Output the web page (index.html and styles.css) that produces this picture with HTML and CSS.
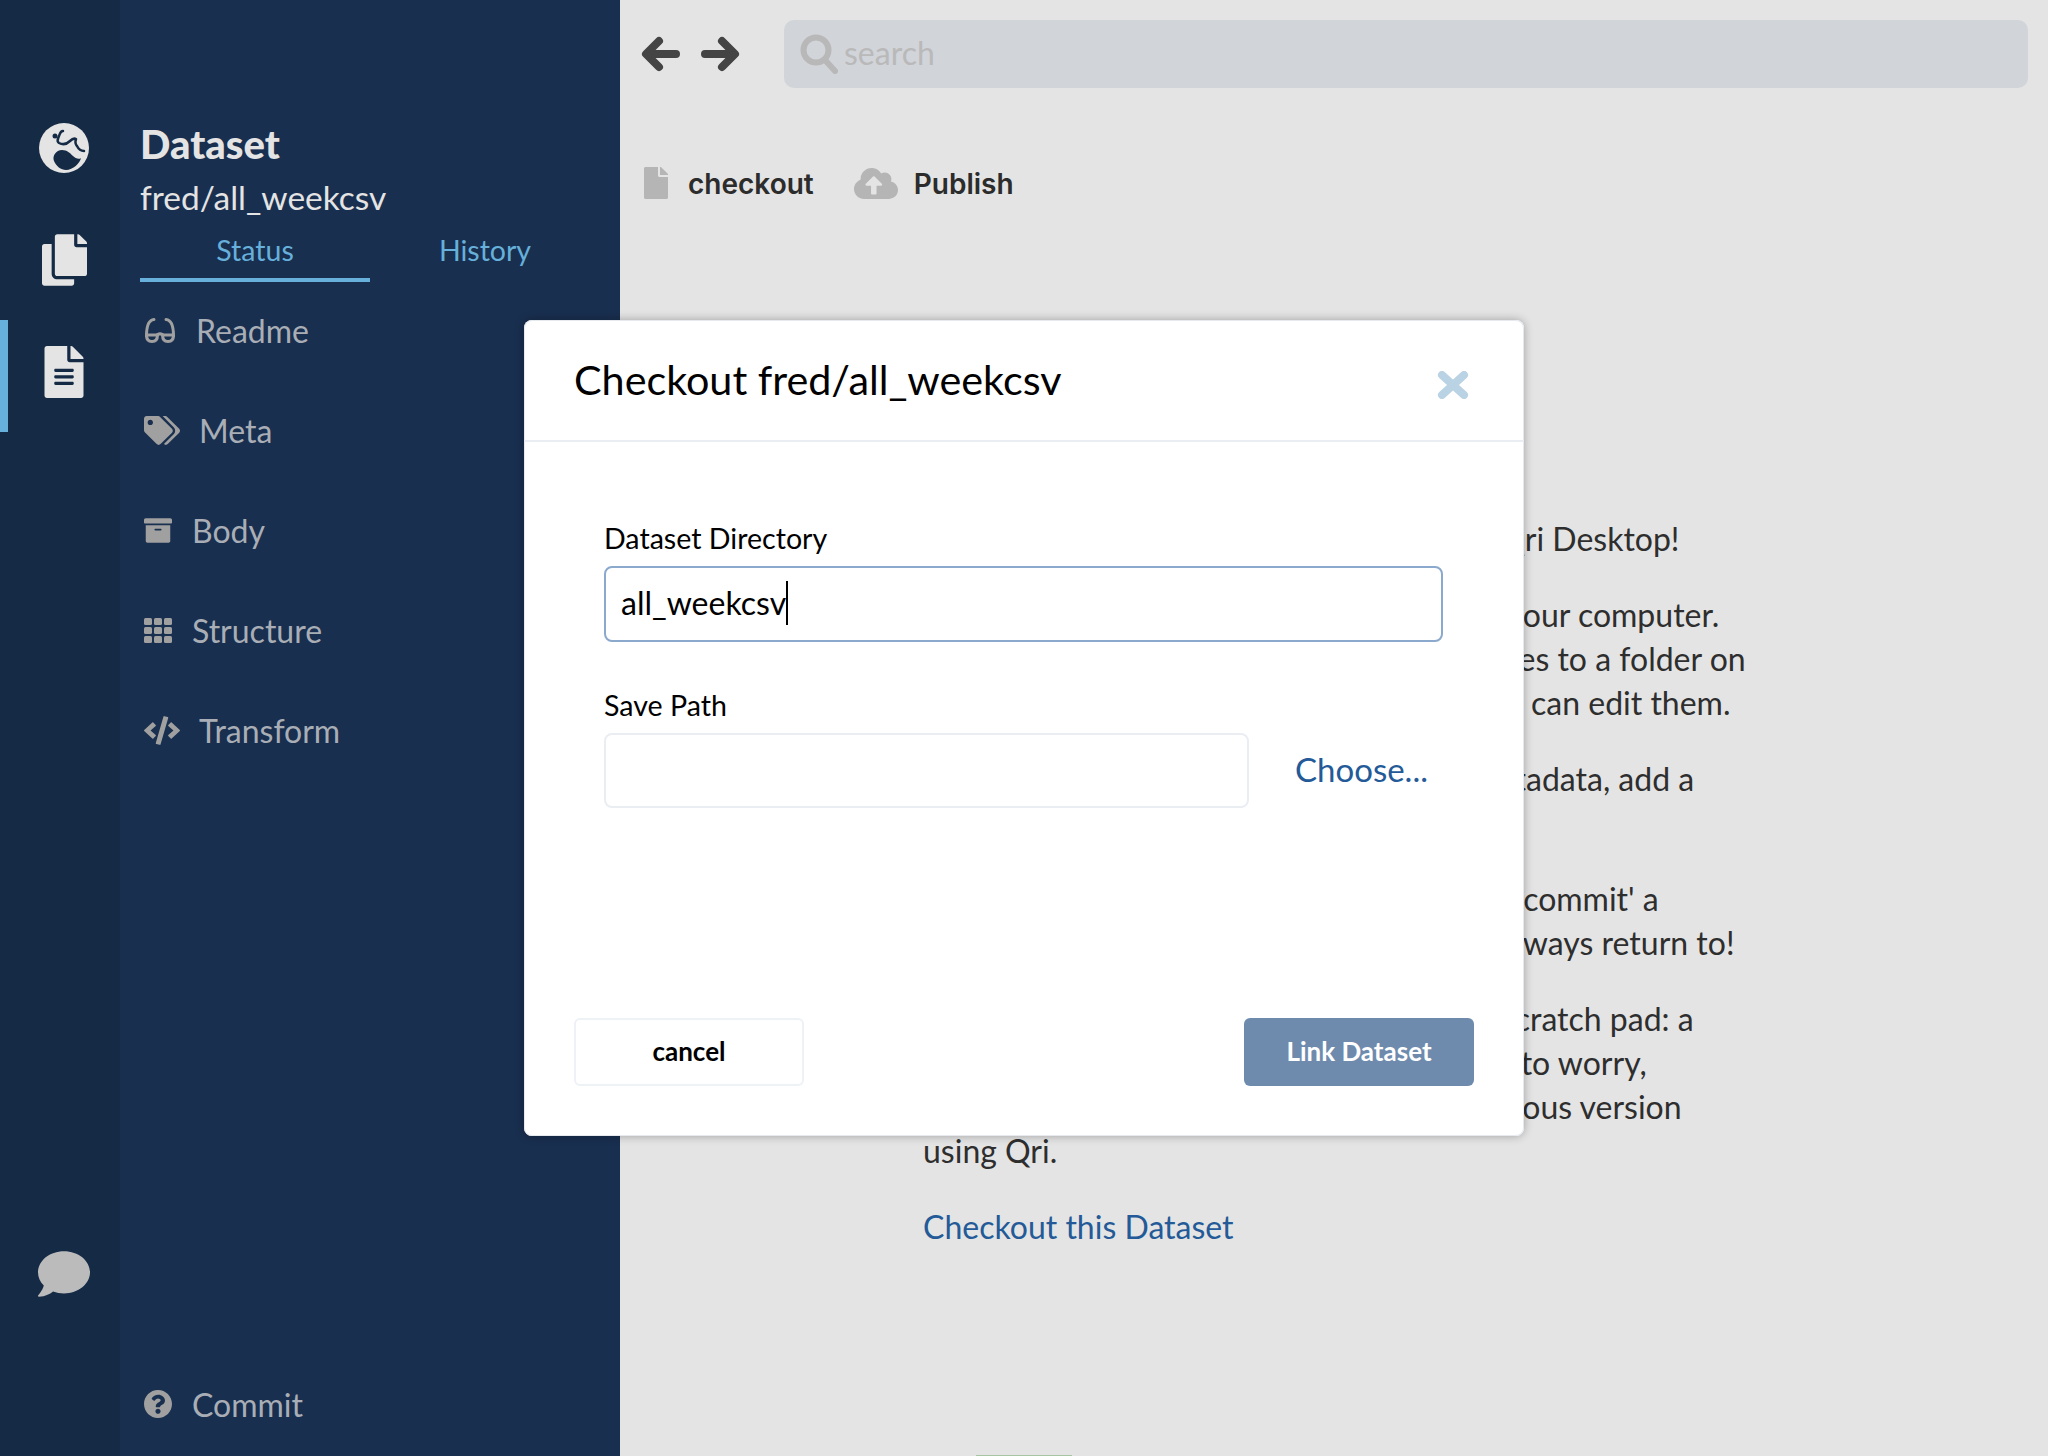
FILE: index.html
```html
<!DOCTYPE html>
<html lang="en">
<head>
    <meta charset="UTF-8">
    <meta name="viewport" content="width=device-width, initial-scale=1.0">
    <title>Qri Desktop</title>
    <link rel="stylesheet" href="styles.css">
</head>
<body>
    <nav class="rail">
        <a class="rail-item">
            <svg class="rail-globe" viewBox="0 0 50 50">
                <circle cx="25" cy="25" r="25" fill="#e4e4e4"/>
                <path class="land" d="M15 38c-2-5 2-11 8-11 5 0 8 3 11 6 2 2 6 4 8 2-1 5-8 12-15 12-5 0-10-4-12-9z"/>
                <path class="land-line" d="M24 8c-3 0-3 3-4 5-1 3-3 5 0 7 4 2 8 1 11-2 2-2 4-3 6-2-1 3-1 5 1 7 1 2 3 5 7 5"/>
                <circle class="land" cx="16" cy="13" r="2.500"/>
            </svg>
        </a>
        <a class="rail-item">
            <svg class="rail-copy" viewBox="0 0 448 512"><path d="M320 448v40c0 13.255-10.745 24-24 24H24c-13.255 0-24-10.745-24-24V120c0-13.255 10.745-24 24-24h72v296c0 30.879 25.121 56 56 56h168zm0-344V0H152c-13.255 0-24 10.745-24 24v368c0 13.255 10.745 24 24 24h272c13.255 0 24-10.745 24-24V128H344c-13.2 0-24-10.8-24-24zm120.971-31.029L375.029 7.029A24 24 0 0 0 358.059 0H352v96h96v-6.059a24 24 0 0 0-7.029-16.97z"/></svg>
        </a>
        <a class="rail-item active">
            <svg class="rail-file" viewBox="0 0 384 512"><path d="M224 136V0H24C10.7 0 0 10.7 0 24v464c0 13.3 10.7 24 24 24h336c13.3 0 24-10.7 24-24V160H248c-13.2 0-24-10.8-24-24zm64 236c0 6.6-5.4 12-12 12H108c-6.6 0-12-5.4-12-12v-8c0-6.6 5.4-12 12-12h168c6.6 0 12 5.4 12 12v8zm0-64c0 6.6-5.4 12-12 12H108c-6.6 0-12-5.4-12-12v-8c0-6.6 5.4-12 12-12h168c6.6 0 12 5.4 12 12v8zm0-72v8c0 6.6-5.4 12-12 12H108c-6.6 0-12-5.4-12-12v-8c0-6.6 5.4-12 12-12h168c6.6 0 12 5.4 12 12zm96-114.1v6.1H256V0h6.1c6.4 0 12.5 2.5 17 7l97.9 98c4.5 4.5 7 10.6 7 16.9z"/></svg>
        </a>
        <a class="rail-item rail-chat">
            <svg class="rail-comment" viewBox="0 0 512 460"><path d="M256 0C114.6 0 0 93.1 0 208c0 49.6 21.4 95 57 130.700C44.500 389.100 2.700 434 2.200 434.500c-2.200 2.300-2.800 5.700-1.500 8.700S4.800 448 8 448c66.300 0 116-31.800 140.600-51.400 32.700 12.300 69 19.400 107.400 19.400 141.400 0 256-93.100 256-208S397.400 0 256 0z"/></svg>
        </a>
    </nav>

    <aside class="sidebar">
        <div class="sidebar-head">
            <div class="sidebar-title">Dataset</div>
            <div class="sidebar-name">fred/all_weekcsv</div>
        </div>
        <div class="tabs">
            <a class="tab active">Status</a>
            <a class="tab">History</a>
        </div>
        <ul class="components">
            <li class="component">
                <svg class="icon-glasses" viewBox="0 0 32 25">
                    <path d="M2.500 17h11c0 4-2 6.500-5.500 6.500S2.500 21 2.500 17zM18.500 17h11c0 4-2 6.500-5.500 6.500s-5.500-2.500-5.500-6.500z"/>
                    <path d="M13.500 16.500c2-1 3-1 5 0M2.500 18C2.500 10 4 2 10 1.500M29.500 18C29.500 10 28 2 22 1.500"/>
                </svg>
                <span>Readme</span>
            </li>
            <li class="component">
                <svg class="icon-tags" viewBox="0 0 640 512"><path d="M497.941 225.941L286.059 14.059A48 48 0 0 0 252.118 0H48C21.49 0 0 21.49 0 48v204.118a48 48 0 0 0 14.059 33.941l211.882 211.882c18.744 18.745 49.136 18.746 67.882 0l204.118-204.118c18.745-18.745 18.745-49.137 0-67.882zM112 160c-26.51 0-48-21.49-48-48s21.49-48 48-48 48 21.49 48 48-21.49 48-48 48zm513.941 133.823L421.823 497.941c-18.745 18.745-49.137 18.745-67.882 0l-.36-.36L527.64 323.522c16.999-16.999 26.36-39.6 26.36-63.64s-9.362-46.641-26.36-63.64L331.397 0h48.721a48 48 0 0 1 33.941 14.059l211.882 211.882c18.745 18.745 18.745 49.137 0 67.882z"/></svg>
                <span>Meta</span>
            </li>
            <li class="component">
                <svg class="icon-box" viewBox="0 0 512 448"><path d="M32 416c0 17.700 14.300 32 32 32h384c17.700 0 32-14.300 32-32V128H32v288zm160-212c0-6.600 5.400-12 12-12h104c6.600 0 12 5.400 12 12v8c0 6.600-5.400 12-12 12H204c-6.600 0-12-5.400-12-12v-8zM480 0H32C14.300 0 0 14.300 0 32v48c0 8.800 7.200 16 16 16h480c8.800 0 16-7.200 16-16V32c0-17.700-14.300-32-32-32z"/></svg>
                <span>Body</span>
            </li>
            <li class="component">
                <svg class="icon-box" viewBox="0 0 28 25">
                    <rect width="8" height="7" rx="1.500"/><rect x="10" width="8" height="7" rx="1.500"/><rect x="20" width="8" height="7" rx="1.500"/>
                    <rect y="9" width="8" height="7" rx="1.500"/><rect x="10" y="9" width="8" height="7" rx="1.500"/><rect x="20" y="9" width="8" height="7" rx="1.500"/>
                    <rect y="18" width="8" height="7" rx="1.500"/><rect x="10" y="18" width="8" height="7" rx="1.500"/><rect x="20" y="18" width="8" height="7" rx="1.500"/>
                </svg>
                <span>Structure</span>
            </li>
            <li class="component">
                <svg class="icon-tags" viewBox="0 0 640 512"><path d="M278.900 511.500l-61-17.700c-6.400-1.800-10-8.500-8.200-14.900L346.200 8.700c1.800-6.400 8.500-10 14.900-8.200l61 17.700c6.400 1.800 10 8.500 8.200 14.900L293.800 503.300c-1.900 6.400-8.500 10.100-14.900 8.200zm-114-112.200l43.500-46.400c4.600-4.900 4.300-12.700-.8-17.200L117 256l90.600-79.700c5.100-4.500 5.500-12.300.8-17.200l-43.500-46.400c-4.500-4.800-12.100-5.100-17-.5L3.800 247.200c-5.100 4.700-5.100 12.800 0 17.500l144.100 135.100c4.900 4.600 12.500 4.400 17-.5zm327.200.6l144.100-135.100c5.100-4.700 5.100-12.800 0-17.500L492.100 112.100c-4.800-4.500-12.400-4.300-17 .5L431.600 159c-4.600 4.900-4.300 12.700.8 17.200L523 256l-90.600 79.700c-5.100 4.500-5.500 12.300-.8 17.200l43.500 46.400c4.500 4.900 12.100 5.100 17 .6z"/></svg>
                <span>Transform</span>
            </li>
            <li class="component commit">
                <svg class="icon-help" viewBox="8 8 496 496"><path d="M504 256c0 136.997-111.043 248-248 248S8 392.997 8 256C8 119.083 119.043 8 256 8s248 111.083 248 248zM262.655 90c-54.497 0-89.255 22.957-116.549 63.758-3.536 5.286-2.353 12.415 2.715 16.258l34.699 26.310c5.205 3.947 12.621 3.008 16.665-2.122 17.864-22.658 30.113-35.797 57.303-35.797 20.429 0 45.698 13.148 45.698 32.958 0 14.976-12.363 22.667-32.534 33.976C247.128 238.528 216 254.941 216 296v4c0 6.627 5.373 12 12 12h56c6.627 0 12-5.373 12-12v-1.333c0-28.462 83.186-29.647 83.186-106.667 0-58.002-60.165-102-116.531-102zM256 338c-25.365 0-46 20.635-46 46 0 25.364 20.635 46 46 46s46-20.636 46-46c0-25.365-20.635-46-46-46z"/></svg>
                <span>Commit</span>
            </li>
        </ul>
    </aside>

    <main class="main">
        <div class="topbar">
            <svg class="arrow" viewBox="0 0 40 36"><path d="M35 18H6M18 5 5 18l13 13"/></svg>
            <svg class="arrow" viewBox="0 0 40 36"><path d="M5 18h29M22 5l13 13-13 13"/></svg>
            <div class="search">
                <svg class="search-icon" viewBox="0 0 38 40"><circle cx="16" cy="16" r="12.500"/><path d="M25 26l10 11"/></svg>
                <span>search</span>
            </div>
        </div>
        <div class="actions">
            <a class="action">
                <svg class="action-file" viewBox="0 0 384 512"><path d="M224 136V0H24C10.700 0 0 10.700 0 24v464c0 13.300 10.700 24 24 24h336c13.300 0 24-10.700 24-24V160H248c-13.200 0-24-10.800-24-24zm160-14.100v6.100H256V0h6.100c6.400 0 12.500 2.500 17 7l97.900 98c4.500 4.500 7 10.600 7 16.900z"/></svg>
                checkout
            </a>
            <a class="action">
                <svg class="action-cloud" viewBox="0 32 640 448"><path d="M537.600 226.600c4.100-10.700 6.400-22.400 6.400-34.600 0-53-43-96-96-96-19.700 0-38.100 6-53.300 16.200C367 64.200 315.300 32 256 32c-88.400 0-160 71.600-160 160 0 2.700.1 5.400.2 8.100C40.200 219.800 0 273.200 0 336c0 79.500 64.500 144 144 144h368c70.700 0 128-57.300 128-128 0-61.900-44-113.600-102.400-125.400zM393.400 288H328v112c0 8.800-7.200 16-16 16h-48c-8.800 0-16-7.200-16-16V288h-65.400c-14.300 0-21.400-17.200-11.300-27.300l105.400-105.400c6.200-6.200 16.400-6.200 22.600 0l105.400 105.400c10.100 10.100 2.900 27.300-11.300 27.300z"/></svg>
                Publish
            </a>
        </div>
        <div class="welcome">
            <p>Let's get you started with your dataset in Qri Desktop!</p>
            <p>To begin, please check out this dataset to your computer.<br>
            Checking out a dataset will also write its files to a folder on<br>
            your computer, in a handy place where you can edit them.</p>
            <p>Now make your changes to the data or metadata, add a<br>
            file.</p>
            <p>When you're happy with them all, you can 'commit' a<br>
            new version of your dataset that you can always return to!</p>
            <p>Think of your working dataset folder as a scratch pad: a<br>
            place to try some things out, with no need to worry,<br>
            and you can always simply revert to a previous version<br>
            using Qri.</p>
            <p><a class="link">Checkout this Dataset</a></p>
        </div>
        <div class="toast-edge"></div>
    </main>

    <div class="modal">
        <div class="modal-header">
            <h2>Checkout fred/all_weekcsv</h2>
            <svg class="modal-close" viewBox="0 0 32 28"><path d="M5 4l22 20M27 4 5 24"/></svg>
        </div>
        <div class="modal-body">
            <label class="field-label">Dataset Directory</label>
            <div class="field focused"><span class="field-text">all_weekcsv</span><span class="caret"></span></div>
            <label class="field-label">Save Path</label>
            <div class="field-row">
                <div class="field short"></div>
                <a class="link choose">Choose...</a>
            </div>
        </div>
        <div class="modal-footer">
            <button class="btn">cancel</button>
            <button class="btn primary">Link Dataset</button>
        </div>
    </div>
</body>
</html>
```

FILE: styles.css
```css
* {
    box-sizing: border-box;
}
body {
    margin: 0;
    height: 100vh;
    display: flex;
    overflow: hidden;
    font-family: Lato, "Open Sans", sans-serif;
    background-color: #e4e4e4;
    color: #2e2e2e;
}

/* far left icon rail */
.rail {
    width: 120px;
    flex-shrink: 0;
    padding-top: 96px;
    display: flex;
    flex-direction: column;
    background-color: #152a45;
}
.rail-item {
    height: 112px;
    padding: 0 0 8px 8px;
    display: flex;
    align-items: center;
    justify-content: center;
    fill: #e4e4e4;
}
.rail-item.active {
    border-left: 8px solid #66b0db;
    padding-left: 0;
}
.rail-chat {
    margin-top: auto;
    margin-bottom: 122px;
    fill: #bbbbbb;
}
.rail-globe {
    width: 50px;
    height: 50px;
}
.land {
    fill: #152a45;
}
.land-line {
    fill: none;
    stroke: #152a45;
    stroke-width: 2.500;
    stroke-linecap: round;
    stroke-linejoin: round;
}
.rail-copy {
    width: 45px;
    height: 52px;
}
.rail-file {
    width: 40px;
    height: 52px;
}
.rail-comment {
    width: 52px;
    height: 47px;
}

/* dataset sidebar */
.sidebar {
    width: 500px;
    flex-shrink: 0;
    display: flex;
    flex-direction: column;
    padding-left: 20px;
    background-color: #192f4f;
}
.sidebar-head {
    padding-top: 122px;
}
.sidebar-title {
    font-size: 40px;
    font-weight: 900;
    line-height: 44px;
    color: #e4e4e4;
}
.sidebar-name {
    font-size: 33.500px;
    line-height: 44px;
    margin-top: 9px;
    color: #e4e4e4;
}
.tabs {
    display: flex;
    height: 63px;
}
.tab {
    width: 230px;
    padding-top: 12px;
    font-size: 28.500px;
    line-height: 38px;
    text-align: center;
    color: #66b0db;
}
.tab.active {
    border-bottom: 4px solid #66b0db;
}
.components {
    flex: 1;
    list-style: none;
    margin: -2px 0 0;
    padding: 0 0 0 4px;
    display: flex;
    flex-direction: column;
}
.component {
    height: 100px;
    flex-shrink: 0;
    display: flex;
    align-items: center;
    font-size: 32px;
    color: #a9aeb6;
    fill: #a0a0a0;
}
.commit {
    margin-top: auto;
    margin-bottom: 2px;
}
.icon-glasses {
    width: 32px;
    height: 25px;
    margin-right: 20px;
    fill: none;
    stroke: #a0a0a0;
    stroke-width: 3;
    stroke-linecap: round;
    stroke-linejoin: round;
}
.icon-tags {
    width: 36px;
    height: 29px;
    margin-right: 19px;
}
.icon-box {
    width: 28px;
    height: 25px;
    margin-right: 20px;
}
.icon-help {
    width: 28px;
    height: 28px;
    margin-right: 20px;
}

/* main pane */
.main {
    flex: 1;
    position: relative;
    overflow: hidden;
}
.topbar {
    height: 108px;
    padding: 20px 20px 20px 21px;
    display: flex;
    align-items: center;
}
.arrow {
    width: 40px;
    height: 36px;
    margin-right: 19px;
    fill: none;
    stroke: #444444;
    stroke-width: 8;
    stroke-linecap: round;
    stroke-linejoin: round;
}
.search {
    flex: 1;
    height: 68px;
    margin-left: 25px;
    padding-left: 16px;
    display: flex;
    align-items: center;
    border-radius: 10px;
    font-size: 32px;
    color: #b9b9b9;
    background-color: #d1d4d9;
}
.search span {
    margin-top: -4px;
}
.search-icon {
    width: 38px;
    height: 40px;
    margin-right: 6px;
    fill: none;
    stroke: #b8b8b8;
    stroke-width: 6;
    stroke-linecap: round;
}
.actions {
    height: 72px;
    margin-top: 40px;
    padding-left: 24px;
    display: flex;
    align-items: center;
}
.action {
    display: flex;
    align-items: center;
    margin-right: 40px;
    font-family: Inter, sans-serif;
    font-size: 28px;
    font-weight: 600;
    color: #2c2c2c;
    fill: #b5b5b5;
}
.action svg {
    margin-top: -2px;
}
.action-file {
    width: 24px;
    height: 34px;
    margin-right: 20px;
}
.action-cloud {
    width: 44px;
    height: 31px;
    margin-right: 16px;
}
.welcome {
    margin-top: 297px;
    padding-left: 303px;
    font-size: 32px;
    line-height: 44px;
    white-space: nowrap;
}
.welcome p {
    margin: 0 0 32px;
}
.link {
    color: #235a97;
}
.toast-edge {
    position: absolute;
    left: 356px;
    bottom: 0;
    width: 96px;
    height: 1px;
    background-color: #a9c4a4;
}

/* checkout modal */
.modal {
    position: absolute;
    left: 524px;
    top: 320px;
    width: 1000px;
    height: 816px;
    display: flex;
    flex-direction: column;
    border-radius: 8px;
    background-color: #ffffff;
    color: #000000;
    box-shadow: inset 0 0 0 1px #e6eaef, 0 0 10px rgba(0, 0, 0, 0.3);
}
.modal-header {
    height: 122px;
    flex-shrink: 0;
    padding: 0 55px 0 50px;
    display: flex;
    align-items: center;
    justify-content: space-between;
    border-bottom: 2px solid #eaeef2;
}
.modal-header h2 {
    margin: 0 0 2px;
    font-size: 41.300px;
    font-weight: 400;
}
.modal-close {
    width: 32px;
    height: 28px;
    margin-top: 10px;
    fill: none;
    stroke: #b9d2e4;
    stroke-width: 8;
    stroke-linecap: round;
}
.modal-body {
    padding: 78px 81px 0 80px;
}
.field-label {
    display: block;
    margin-top: 45px;
    margin-bottom: 10px;
    font-size: 28.600px;
    line-height: 36px;
}
.field-label:first-child {
    margin-top: 0;
}
.field {
    height: 76px;
    padding: 0 12px 3px 15px;
    display: flex;
    align-items: center;
    font-size: 32px;
    border: 2px solid #eaeef2;
    border-radius: 8px;
}
.field.focused {
    border-color: #8ba9cc;
}
.caret {
    width: 2px;
    height: 44px;
    background-color: #000000;
}
.field-row {
    margin-top: 3px;
    display: flex;
    align-items: center;
}
.field.short {
    width: 645px;
    height: 75px;
    margin-right: 46px;
}
.choose {
    margin-bottom: 3px;
    font-size: 33px;
}
.modal-footer {
    margin-top: auto;
    padding: 0 50px 50px 50px;
    display: flex;
    justify-content: space-between;
}
.btn {
    width: 230px;
    height: 68px;
    padding-bottom: 3px;
    font-family: Lato, sans-serif;
    font-size: 26px;
    font-weight: 700;
    color: #000000;
    background-color: #ffffff;
    border: 2px solid #eef1f5;
    border-radius: 6px;
}
.btn.primary {
    color: #ffffff;
    background-color: #6e8bad;
    border: none;
}
```
